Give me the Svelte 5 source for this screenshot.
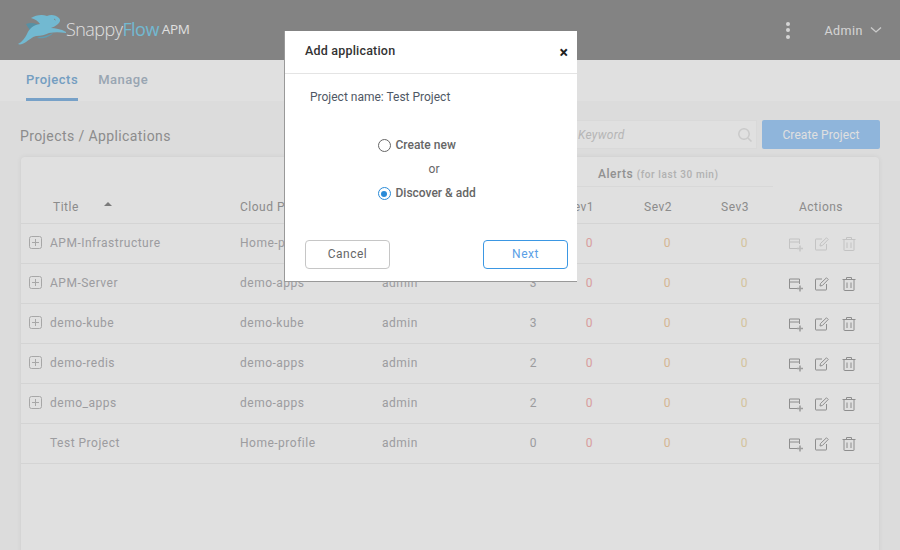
<script>
	const rows = [
		{ title: 'APM-Infrastructure', cloud: 'Home-profile', owner: 'admin', apps: 3, expand: true, disabled: true },
		{ title: 'APM-Server', cloud: 'demo-apps', owner: 'admin', apps: 3, expand: true },
		{ title: 'demo-kube', cloud: 'demo-kube', owner: 'admin', apps: 3, expand: true },
		{ title: 'demo-redis', cloud: 'demo-apps', owner: 'admin', apps: 2, expand: true },
		{ title: 'demo_apps', cloud: 'demo-apps', owner: 'admin', apps: 2, expand: true },
		{ title: 'Test Project', cloud: 'Home-profile', owner: 'admin', apps: 0, expand: false }
	];
</script>

<div class="page">
	<header class="topbar">
		<div class="logo">
			<svg class="bunny" width="50" height="32" viewBox="0 0 50 32">
				<path class="bunny-back" d="M9 11 C14 9 19 10 23 13 L16 21 C13 18 11 14 9 11 Z" />
				<path class="bunny-body" d="M1 31 C5 29 8 25 10 21 C12 16 16 12 23 11 C21 8 18 6 14 5 C19 2 25 1 30 3 C34 1 39 2 42 5 C44 7 43 9 41 11 C39 13 36 14 34 15 C38 15 44 16 49 19 L49 20 C43 19 37 19 32 20 C28 22 24 23 19 23 C15 24 12 27 9 29 C6 31 3 32 1 31 Z" />
				<path class="bunny-leg" d="M22 24 C27 24 32 22 36 20 C33 24 27 26 20 25 Z" />
				<path d="M37 6 L38.5 7" stroke="#969696" stroke-width="1" />
			</svg>
			<span class="brand">Snappy<em>Flow</em></span>
			<span class="apm">APM</span>
		</div>
		<div class="topbar-right">
			<div class="kebab"><i></i><i></i><i></i></div>
			<span class="user">Admin</span>
			<svg width="12" height="8" viewBox="0 0 12 8"><path d="M1 1.5 L6 6 L11 1.5" fill="none" stroke="#e8e8e8" stroke-width="1.3" /></svg>
		</div>
	</header>

	<nav class="tabs">
		<span class="tab active">Projects</span>
		<span class="tab">Manage</span>
	</nav>

	<main class="content">
		<div class="toolbar">
			<h1>Projects / Applications</h1>
			<div class="search">
				<span>Keyword</span>
				<svg width="16" height="16" viewBox="0 0 16 16"><circle cx="7" cy="7" r="5.2" fill="none" stroke="#e6e6e6" stroke-width="1.5" /><path d="M11 11 L14.5 14.5" stroke="#e6e6e6" stroke-width="1.5" /></svg>
			</div>
			<button class="create">Create Project</button>
		</div>

		<section class="card">
			<div class="group-row">
				<div class="alerts-head">Alerts <small>(for last 30 min)</small></div>
			</div>
			<div class="row head">
				<span></span>
				<span class="sortable">Title <i class="sort"></i></span>
				<span>Cloud Profile</span>
				<span>Owner</span>
				<span class="num">Apps</span>
				<span class="num">Sev1</span>
				<span class="num">Sev2</span>
				<span class="num">Sev3</span>
				<span class="center">Actions</span>
			</div>
			{#each rows as row}
				<div class="row body">
					<span class="expander">
						{#if row.expand}
							<svg width="13" height="13" viewBox="0 0 13 13"><rect x="0.5" y="0.5" width="12" height="12" rx="2" fill="none" stroke="#bfbfbf" /><path d="M6.5 3 V10 M3 6.5 H10" stroke="#bfbfbf" /></svg>
						{/if}
					</span>
					<span>{row.title}</span>
					<span>{row.cloud}</span>
					<span>{row.owner}</span>
					<span class="num">{row.apps}</span>
					<span class="num sev1">0</span>
					<span class="num sev2">0</span>
					<span class="num sev3">0</span>
					<span class="actions" class:disabled={row.disabled}>
						<svg width="14" height="16" viewBox="0 0 14 16" fill="none" stroke="#a2a2a2">
							<path d="M8.5 12.5 H0.5 V3 H10.5 V8 M0.5 6 H10.5" />
							<path d="M11 9.5 V15.5 M8 12.5 H14" stroke="#b4b4b4" stroke-width="1.6" />
						</svg>
						<svg width="16" height="16" viewBox="0 0 16 16" fill="none" stroke="#a2a2a2">
							<path d="M8 3 H2 Q1.5 3 1.5 3.5 V13.5 Q1.5 14 2 14 H12 Q12.5 14 12.5 13.5 V8" />
							<path d="M6 10 L6.5 7.5 L12.5 1.8 L14.2 3.5 L8.4 9.5 Z" stroke-width="1" />
						</svg>
						<svg width="16" height="16" viewBox="0 0 16 16" fill="none" stroke="#a2a2a2">
							<path d="M1.5 3.5 H14.5 M5.5 3 V1.5 H10.5 V3 M3 4 V14 Q3 14.5 3.5 14.5 H12.5 Q13 14.5 13 14 V4" />
							<path d="M6 6.5 V12 M10 6.5 V12" />
						</svg>
					</span>
				</div>
			{/each}
		</section>
	</main>

	<div class="scrim"></div>

	<div class="modal">
		<div class="modal-head">
			<span>Add application</span>
			<button class="close">×</button>
		</div>
		<p class="project">Project name: Test Project</p>
		<div class="choices">
			<label><i class="radio"></i>Create new</label>
			<span class="or">or</span>
			<label><i class="radio on"></i>Discover &amp; add</label>
		</div>
		<div class="modal-foot">
			<button class="btn">Cancel</button>
			<button class="btn next">Next</button>
		</div>
	</div>
</div>

<style>
	:global(body) {
		margin: 0;
		overflow: hidden;
	}

	.page {
		position: relative;
		height: 550px;
		overflow: hidden;
		background: #fbfbfb;
		font-family: Roboto, 'Liberation Sans', sans-serif;
		font-size: 12px;
		letter-spacing: 0.5px;
		color: #b2b2b6;
	}

	.topbar {
		height: 60px;
		background: #969696;
		display: flex;
		align-items: center;
		justify-content: space-between;
		padding: 0 18px 0 17px;
	}

	.logo {
		display: flex;
		align-items: center;
		position: relative;
	}

	.bunny {
		margin: -1px -1px 0 0;
		position: relative;
		top: -1px;
	}

	.bunny-body {
		fill: #82d3ee;
	}

	.bunny-back {
		fill: #62a4bb;
	}

	.bunny-leg {
		fill: #6bb3cc;
	}

	.brand {
		font-family: 'Open Sans', sans-serif;
		font-size: 18px;
		font-weight: 300;
		letter-spacing: -0.55px;
		color: #fff;
		margin-top: -3px;
	}

	.brand em {
		font-style: normal;
		font-weight: 400;
		color: #82d3ee;
	}

	.apm {
		font-family: 'Open Sans', sans-serif;
		font-size: 13.5px;
		letter-spacing: -0.3px;
		color: #fff;
		margin: -3px 0 0 3px;
	}

	.topbar-right {
		display: flex;
		align-items: center;
	}

	.kebab {
		display: flex;
		flex-direction: column;
		gap: 2.5px;
		margin-right: 34px;
	}

	.kebab i {
		width: 4px;
		height: 4px;
		border-radius: 50%;
		background: #f2f2f2;
	}

	.user {
		color: #f2f2f2;
		font-size: 12.5px;
		margin-right: 7px;
	}

	.tabs {
		height: 41px;
		background: #fff;
		display: flex;
		gap: 20px;
		padding: 0 26px;
		box-sizing: border-box;
	}

	.tab {
		height: 41px;
		box-sizing: border-box;
		padding-top: 12px;
		font-size: 13px;
		font-weight: 500;
		color: #aebccb;
	}

	.tab.active {
		color: #84b4dc;
		border-bottom: 3px solid #88b8e4;
	}

	.content {
		padding: 19px 20px 0;
	}

	.toolbar {
		display: flex;
		align-items: center;
		height: 29px;
	}

	h1 {
		margin: 3px 0 0;
		font-size: 14px;
		font-weight: 400;
		letter-spacing: 0.4px;
		color: #a0a0a0;
		flex: 1;
	}

	.search {
		width: 230px;
		height: 29px;
		box-sizing: border-box;
		background: #fff;
		border: 1px solid #f7f7f7;
		display: flex;
		align-items: center;
		justify-content: space-between;
		padding: 0 3px 0 50px;
	}

	.search span {
		font-style: italic;
		font-size: 12px;
		letter-spacing: 0.3px;
		color: #d0d0d0;
	}

	.create {
		width: 118px;
		height: 29px;
		margin-left: 5px;
		border: none;
		border-radius: 2px;
		background: #a3cefa;
		color: #fff;
		font: inherit;
		font-size: 12px;
		letter-spacing: 0.1px;
	}

	.card {
		margin: 8px 1px 0;
		height: 420px;
		background: #fff;
		border-radius: 4px;
		box-shadow: 0 0 5px rgba(0, 0, 0, 0.08);
	}

	.group-row {
		height: 30px;
		display: flex;
		justify-content: flex-end;
		padding-right: 106px;
	}

	.alerts-head {
		width: 223px;
		height: 30px;
		box-sizing: border-box;
		padding: 10px 0 0 48px;
		border-bottom: 1px solid #f6f6f6;
		font-weight: 500;
		font-size: 12px;
		color: #a6a6a6;
	}

	.alerts-head small {
		font-size: 10px;
		letter-spacing: 0.6px;
		color: #cacaca;
	}

	.row {
		display: grid;
		grid-template-columns: 29px 190px 142px 108px 47px 57px 78px 77px 130px;
		align-items: center;
		height: 40px;
		box-sizing: border-box;
		border-bottom: 1px solid #f2f2f2;
	}

	.row.head {
		height: 37px;
		color: #a0a0a0;
		padding-top: 4px;
	}

	.row.body {
		padding-bottom: 2px;
	}

	.sortable {
		padding-left: 3px;
	}

	.sort {
		display: inline-block;
		margin: 0 0 5px 22px;
		border: 4px solid transparent;
		border-top: 0;
		border-bottom: 4px solid #8c8c8c;
	}

	.expander {
		display: flex;
		padding-left: 8px;
	}

	.num {
		text-align: right;
	}

	.center {
		text-align: center;
		padding-left: 14px;
	}

	.sev1 {
		color: #f6b4b4;
		padding-right: 1px;
	}

	.sev2 {
		color: #f4d0a8;
		padding-right: 1px;
	}

	.sev3 {
		color: #f2deb2;
		padding-right: 1px;
	}

	.actions {
		display: flex;
		justify-content: center;
		gap: 11px;
		padding-left: 17px;
		padding-top: 2px;
	}

	.actions.disabled {
		opacity: 0.35;
	}

	.scrim {
		position: absolute;
		inset: 0;
		background: rgba(0, 0, 0, 0.12);
	}

	.modal {
		position: absolute;
		left: 284px;
		top: 31px;
		width: 293px;
		height: 251px;
		box-sizing: border-box;
		background: #fff;
		border-left: 1px solid #999;
		border-bottom: 1px solid #999;
		display: flex;
		flex-direction: column;
		color: #555;
		font-size: 12px;
		letter-spacing: 0;
	}

	.modal-head {
		height: 43px;
		box-sizing: border-box;
		border-bottom: 1px solid #e4e4e4;
		display: flex;
		align-items: center;
		justify-content: space-between;
		padding: 0 9px 3px 20px;
		font-size: 12.5px;
		font-weight: 500;
		letter-spacing: 0.2px;
		color: #333;
	}

	.close {
		border: none;
		background: none;
		padding: 0;
		font: inherit;
		font-size: 16px;
		font-weight: 700;
		line-height: 1;
		color: #222;
		margin-top: 5px;
	}

	.project {
		margin: 16px 0 0 25px;
		line-height: 15px;
		color: #4f5865;
	}

	.choices {
		margin-top: 33px;
		padding-left: 6px;
		display: flex;
		flex-direction: column;
		align-items: center;
		gap: 9px;
		color: #666;
	}

	.choices label {
		display: flex;
		align-items: center;
		gap: 5px;
		line-height: 15px;
		font-weight: 500;
		width: 113px;
		white-space: nowrap;
	}

	.or {
		line-height: 15px;
	}

	.radio {
		width: 13px;
		height: 13px;
		box-sizing: border-box;
		border: 1.5px solid #666;
		border-radius: 50%;
		display: flex;
		align-items: center;
		justify-content: center;
	}

	.radio.on {
		border-color: #2a8bd8;
	}

	.radio.on::after {
		content: '';
		width: 6px;
		height: 6px;
		border-radius: 50%;
		background: #2a8bd8;
	}

	.modal-foot {
		margin-top: auto;
		margin-bottom: 12px;
		display: flex;
		justify-content: space-between;
		padding: 0 9px 0 20px;
	}

	.btn {
		width: 85px;
		height: 29px;
		box-sizing: border-box;
		background: #fff;
		border: 1px solid #c6c6c6;
		border-radius: 4px;
		padding: 0 0 2px;
		font: inherit;
		letter-spacing: 0.5px;
		color: #666;
	}

	.btn.next {
		border-color: #3b97e3;
		color: #5a9fe6;
	}
</style>
